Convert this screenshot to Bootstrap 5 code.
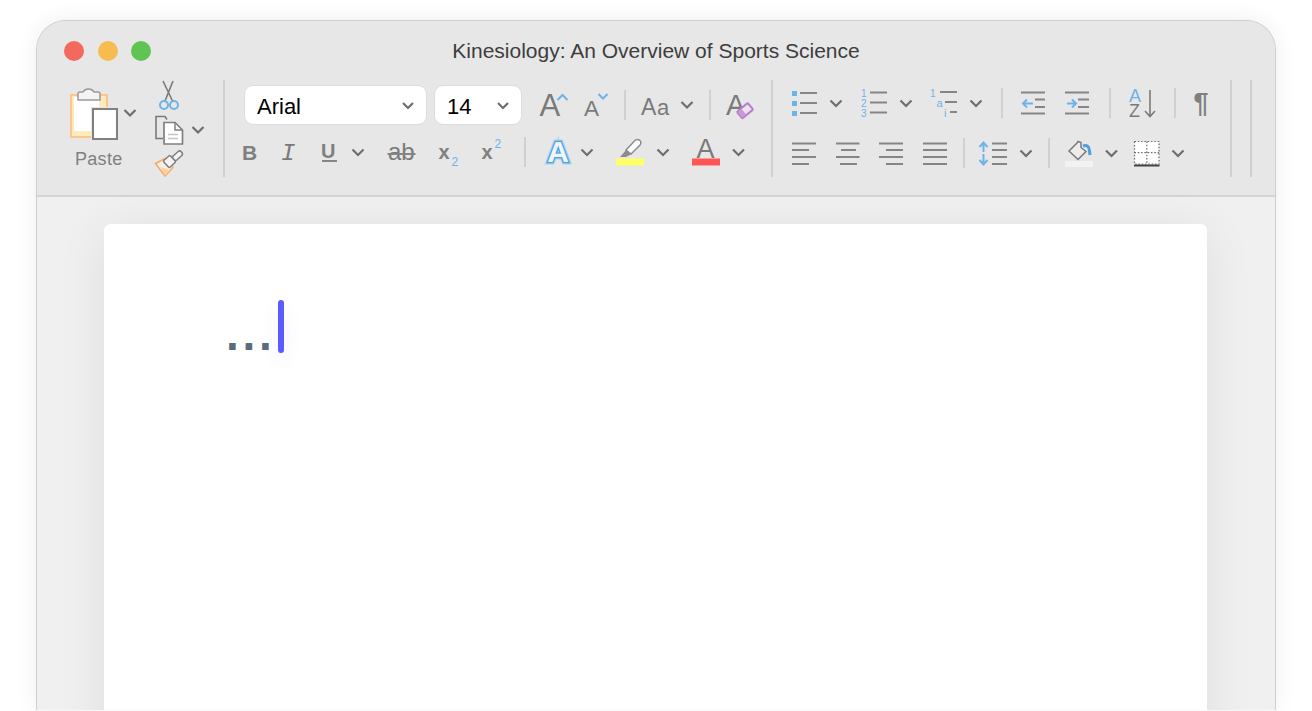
<!DOCTYPE html>
<html lang="en">

<head>
  <meta charset="UTF-8">
  <meta name="viewport" content="width=device-width, initial-scale=1">
  <title>Kinesiology: An Overview of Sports Science</title>
  <link href="https://cdn.jsdelivr.net/npm/bootstrap@5.3.3/dist/css/bootstrap.min.css" rel="stylesheet">
  <style>
    body {
      height: 711px;
      overflow: hidden;
      background-color: #ffffff;
      font-family: "Liberation Sans", Arial, sans-serif;
    }

    .app-window {
      width: 1240px;
      height: 690px;
      margin: 20px auto 0;
      border: 1px solid #cfcfcf;
      border-bottom: 0;
      border-radius: 30px 30px 0 0;
      background-color: #f0f0f0;
      box-shadow: 0 0 22px rgba(0, 0, 0, 0.07);
      overflow: hidden;
    }

    .ribbon {
      height: 176px;
      background-color: #e7e7e7;
      border-bottom: 2px solid #d4d4d4;
    }

    .title-row {
      display: grid;
      grid-template-columns: 1fr auto 1fr;
      align-items: center;
      height: 59px;
    }

    .title-text {
      font-size: 21px;
      color: #3d3d3d;
      white-space: nowrap;
    }

    .light {
      width: 20px;
      height: 20px;
      border-radius: 50%;
    }

    .light-red { background-color: #f4695e; }
    .light-yellow { background-color: #f6bc4f; }
    .light-green { background-color: #60c453; }

    .lights {
      gap: 13.6px;
      padding-left: 27px;
    }

    .tall-sep {
      flex: none;
      width: 2px;
      height: 97px;
      margin: 0 1px 0 -1px;
      background-color: #d0d0d0;
    }

    .tall-sep + .tall-sep { margin-left: 17px; }

    .row-sep {
      flex: none;
      width: 2px;
      height: 30px;
      margin: 0 1px 0 -1px;
      background-color: #d0d0d0;
    }

    .paste-col { width: 113px; }

    .paste-label {
      padding-left: 38px;
      margin-top: 5px;
      font-size: 18px;
      line-height: 24px;
      letter-spacing: 0.3px;
      color: #808080;
    }

    .clip-col { width: 74px; }

    .font-col { width: 546px; }
    .para-col { width: 457px; }

    .font-top {
      height: 40px;
      margin-top: 5px;
    }

    .font-bottom {
      height: 30px;
      margin-top: 12px;
    }

    .para-top {
      height: 30px;
      margin-top: 8px;
    }

    .para-bottom {
      height: 30px;
      margin-top: 20px;
    }

    .font-box {
      height: 40px;
      padding: 2px 12px 0;
      border: 1px solid #dcdcdc;
      border-radius: 9px;
      background-color: #ffffff;
      font-size: 22px;
      color: #000000;
    }

    .box-name { width: 183px; margin-left: 18px; }
    .box-size { width: 88px; margin-left: 7px; }

    .tools svg {
      display: block;
      flex: none;
      overflow: visible;
    }

    .chv, .ln, .ln-thin {
      fill: none;
      stroke: #7a7a7a;
    }

    .chv { stroke: #6e6e6e; stroke-width: 2.2; }
    .ln { stroke-width: 2; stroke: #858585; }
    .ln-thin { stroke-width: 1.6; }

    .blu {
      fill: none;
      stroke: #6db3e8;
      stroke-width: 2;
    }

    .gl {
      font-family: "Liberation Sans", Arial, sans-serif;
      fill: #7a7a7a;
    }

    .gl-b { font-weight: 700; fill: #808080; }
    .gl-blue { fill: #6db3e8; }
    .gl-mono { font-family: "Liberation Mono", monospace; font-style: italic; }

    .a-glow {
      font-weight: 700;
      fill: #dfeffb;
      stroke: #a9d3f2;
      stroke-width: 5px;
      paint-order: stroke;
    }

    .a-core {
      font-weight: 700;
      fill: #eef6fc;
      stroke: #4f9fdc;
      stroke-width: 2.6px;
      paint-order: stroke;
    }

    .doc-sheet {
      height: 600px;
      margin: 27px 68px 0 67px;
      padding: 76px 0 0 122px;
      border-radius: 6px;
      background-color: #ffffff;
      box-shadow: 0 8px 50px rgba(0, 0, 0, 0.08);
    }

    .doc-dots {
      width: 52px;
      margin-top: 8px;
      font-size: 46px;
      font-weight: 700;
      line-height: 53px;
      letter-spacing: 3.7px;
      white-space: nowrap;
      color: #5a6b80;
    }

    .doc-caret {
      width: 6px;
      height: 53px;
      border-radius: 3px;
      background-color: #5b5bff;
      box-shadow: 0 8px 18px rgba(91, 91, 255, 0.1);
    }
  </style>
</head>

<body>
  <div class="app-window">
    <div class="ribbon">
      <div class="title-row">
        <div class="lights d-flex">
          <div class="light light-red"></div>
          <div class="light light-yellow"></div>
          <div class="light light-green"></div>
        </div>
        <div class="title-text">Kinesiology: An Overview of Sports Science</div>
        <div></div>
      </div>

      <div class="tools d-flex">
        <!-- paste -->
        <div class="paste-col">
          <svg width="113" height="62" viewBox="37 80 113 62">
            <rect x="71" y="95" width="36" height="42" fill="#ffe9bd" stroke="#fbc68c" stroke-width="2"/>
            <rect x="74" y="97" width="25" height="34" fill="#ffffff"/>
            <path d="M78 100v-6q0-2 2-2h3a6 5 0 0 1 11 0h4q2 0 2 2v6z" fill="#f4f4f4" stroke="#9a9a9a" stroke-width="1.5"/>
            <rect x="91" y="107" width="28" height="34" fill="#e6e6e6"/>
            <rect x="93" y="109" width="24" height="30" fill="#ffffff" stroke="#808080" stroke-width="2"/>
            <path class="chv" d="M124.500 110l5.500 5.500 5.500-5.500"/>
          </svg>
          <div class="paste-label">Paste</div>
        </div>
        <div class="clip-col">
          <svg width="74" height="33" viewBox="150 80 74 33">
            <path class="ln-thin" d="M163 81l9.500 20M173 81l-8 20"/>
            <circle class="blu" cx="164" cy="105" r="4"/>
            <circle class="blu" cx="174" cy="105" r="4"/>
          </svg>
          <svg width="74" height="35" viewBox="150 113 74 35">
            <path class="ln-thin" d="M163 138.500h-7v-22h9l2 3"/>
            <path d="M164 122.500h11l7.500 7.500v14h-18.500z" fill="#ffffff" stroke="#808080" stroke-width="1.700"/>
            <path d="M175 122.500v7.500h7.500" fill="none" stroke="#808080" stroke-width="1.500"/>
            <path d="M168 134.500h10M168 138.500h10" fill="none" stroke="#c4c4c4" stroke-width="1.500"/>
            <path class="chv" d="M192.500 127l5.500 5.500 5.500-5.500"/>
          </svg>
          <svg width="74" height="29" viewBox="150 148 74 29">
            <path d="M155.500 163.500l9.500-5 8 9-8 8.500z" fill="#f5efe6" stroke="#f6a96b" stroke-width="1.500"/>
            <path d="M160.500 167l9.500 3.500-5 5z" fill="#ffd09a"/>
            <rect x="172" y="153" width="11" height="5.500" rx="2.500" transform="rotate(-42 177.500 155.750)" fill="#f4f4f4" stroke="#7f7f7f" stroke-width="1.500"/>
            <rect x="165" y="157" width="9" height="9" rx="1" transform="rotate(-42 169.500 161.500)" fill="#f4f4f4" stroke="#7f7f7f" stroke-width="1.500"/>
          </svg>
        </div>
        <div class="tall-sep"></div>

        <!-- font group -->
        <div class="font-col">
          <div class="font-top d-flex">
            <button type="button" class="font-box box-name d-flex align-items-center justify-content-between">
              <span>Arial</span>
              <svg width="12" height="8" viewBox="0 0 12 8"><path class="chv" d="M1 1l5 5 5-5"/></svg>
            </button>
            <button type="button" class="font-box box-size d-flex align-items-center justify-content-between">
              <span>14</span>
              <svg width="12" height="8" viewBox="0 0 12 8"><path class="chv" d="M1 1l5 5 5-5"/></svg>
            </button>
            <svg width="52" height="40" viewBox="522 85 52 40">
              <text class="gl" x="539.500" y="116" font-size="31">A</text>
              <path class="blu" d="M557.500 100l5-5 5 5"/>
            </svg>
            <svg width="51" height="40" viewBox="574 85 51 40">
              <text class="gl" x="584" y="116" font-size="22.500">A</text>
              <path class="blu" d="M598.500 94l4.500 4.500 4.500-4.500"/>
            </svg>
            <div class="row-sep align-self-center"></div>
            <svg width="83" height="40" viewBox="627 85 83 40">
              <text class="gl" x="641" y="115" font-size="23">A</text>
              <text class="gl" x="657" y="115" font-size="22">a</text>
              <path class="chv" d="M681.500 102l5.500 5.500 5.500-5.500"/>
            </svg>
            <div class="row-sep align-self-center"></div>
            <svg width="48" height="40" viewBox="712 85 48 40">
              <text class="gl" x="726" y="115" font-size="29">A</text>
              <rect x="738" y="106.500" width="14" height="8.500" rx="1" transform="rotate(-40 745 110.700)" fill="#ece0f1" stroke="#b77fc9" stroke-width="2"/>
              <path d="M737.800 112.500l4-3.300 4.400 5.200-4 3.300z" fill="#c79ad6"/>
            </svg>
          </div>
          <div class="font-bottom d-flex">
            <svg width="44" height="30" viewBox="226 137 44 30">
              <text class="gl gl-b" x="242" y="159.500" font-size="21">B</text>
            </svg>
            <svg width="38" height="30" viewBox="270 137 38 30">
              <text class="gl gl-mono" x="281" y="159.500" font-size="24">I</text>
            </svg>
            <svg width="62" height="30" viewBox="308 137 62 30">
              <text class="gl gl-b" x="321" y="157.500" font-size="20">U</text>
              <path class="ln" d="M322 161h15"/>
              <path class="chv" d="M352.500 149.500l5.500 5.500 5.500-5.500"/>
            </svg>
            <svg width="58" height="30" viewBox="370 137 58 30">
              <text class="gl" x="388" y="159.500" font-size="24">ab</text>
              <path class="ln" d="M387.500 154h28"/>
            </svg>
            <svg width="42" height="30" viewBox="428 137 42 30">
              <text class="gl gl-b" x="438.500" y="158.500" font-size="20">x</text>
              <text class="gl gl-blue" x="451.500" y="166" font-size="12">2</text>
            </svg>
            <svg width="55" height="30" viewBox="470 137 55 30">
              <text class="gl gl-b" x="481.500" y="158.500" font-size="20">x</text>
              <text class="gl gl-blue" x="494.500" y="147.500" font-size="12">2</text>
            </svg>
            <div class="row-sep"></div>
            <svg width="71" height="30" viewBox="527 137 71 30">
              <text class="gl a-glow" x="558" y="162" font-size="30" text-anchor="middle">A</text>
              <text class="gl a-core" x="558" y="162" font-size="30" text-anchor="middle">A</text>
              <path class="chv" d="M581.500 149.500l5.500 5.500 5.500-5.500"/>
            </svg>
            <svg width="76" height="30" viewBox="598 137 76 30">
              <path d="M626 150l9-9.500a2.500 2.500 0 0 1 5 4.500l-9 9z" fill="#ffffff" stroke="#8c8c8c" stroke-width="1.500"/>
              <path d="M626 150l5 4.500-5 2.500h-6z" fill="#8c8c8c"/>
              <rect x="616" y="158.500" width="28" height="7" fill="#ffff66"/>
              <path class="chv" d="M657.500 149.500l5.500 5.500 5.500-5.500"/>
            </svg>
            <svg width="76" height="30" viewBox="674 137 76 30">
              <text class="gl" x="696.500" y="157.500" font-size="27">A</text>
              <rect x="692" y="158.500" width="28" height="7" fill="#ff5555"/>
              <path class="chv" d="M733 149.500l5.500 5.500 5.500-5.500"/>
            </svg>
          </div>
        </div>
        <div class="tall-sep"></div>

        <!-- paragraph group -->
        <div class="para-col">
          <div class="para-top d-flex">
            <svg width="76" height="30" viewBox="774 88 76 30">
              <path d="M792 91h5v5h-5zM792 101h5v5h-5zM792 111h5v5h-5z" fill="#6db3e8"/>
              <path class="ln" d="M800 93h17M800 103h17M800 113h17"/>
              <path class="chv" d="M830.500 100.500l5.500 5.500 5.500-5.500"/>
            </svg>
            <svg width="70" height="30" viewBox="850 88 70 30">
              <text class="gl gl-blue" x="861" y="96.500" font-size="10">1</text>
              <text class="gl gl-blue" x="861" y="106.500" font-size="10">2</text>
              <text class="gl gl-blue" x="861" y="116.500" font-size="10">3</text>
              <path class="ln" d="M870 92.500h17M870 102.500h17M870 112.500h17"/>
              <path class="chv" d="M900.500 100.500l5.500 5.500 5.500-5.500"/>
            </svg>
            <svg width="82" height="30" viewBox="920 88 82 30">
              <text class="gl gl-blue" x="930" y="96.500" font-size="10">1</text>
              <text class="gl gl-blue" x="936.500" y="107" font-size="11">a</text>
              <text class="gl gl-blue" x="944" y="117" font-size="11">i</text>
              <path class="ln" d="M940 92h17M945 102h12M950 112h7"/>
              <path class="chv" d="M970.500 100.500l5.500 5.500 5.500-5.500"/>
            </svg>
            <div class="row-sep"></div>
            <svg width="51" height="30" viewBox="1004 88 51 30">
              <path class="ln" d="M1021 92.500h24M1035 99.500h10M1035 107h10M1021 113.500h24"/>
              <path class="blu" d="M1033 103.500h-10M1027 99.500l-4 4 4 4"/>
            </svg>
            <svg width="55" height="30" viewBox="1055 88 55 30">
              <path class="ln" d="M1065 92.500h24M1078 99.500h11M1078 107h11M1065 113.500h24"/>
              <path class="blu" d="M1067 103.500h9M1072 99.500l4 4-4 4"/>
            </svg>
            <div class="row-sep"></div>
            <svg width="63" height="30" viewBox="1112 88 63 30">
              <text class="gl gl-blue" x="1129" y="102" font-size="18">A</text>
              <text class="gl" x="1129" y="117" font-size="18">Z</text>
              <path class="ln-thin" d="M1150 90v26M1145 111l5 5.500 5-5.500"/>
            </svg>
            <div class="row-sep"></div>
            <svg width="48" height="30" viewBox="1177 88 48 30">
              <text class="gl gl-b" x="1193.500" y="112" font-size="27">¶</text>
            </svg>
          </div>
          <div class="para-bottom d-flex">
            <svg width="52" height="30" viewBox="774 138 52 30">
              <path class="ln" d="M792 143.500h24M792 150h17M792 157h24M792 164h17"/>
            </svg>
            <svg width="43" height="30" viewBox="826 138 43 30">
              <path class="ln" d="M836 143.500h23.500M841 150h15M836 157h23.500M840 164h17"/>
            </svg>
            <svg width="44" height="30" viewBox="869 138 44 30">
              <path class="ln" d="M879 143.500h24M886 150h17M879 157h24M886 164h17"/>
            </svg>
            <svg width="51" height="30" viewBox="913 138 51 30">
              <path class="ln" d="M923 143.500h24M923 150h24M923 157h24M923 164h24"/>
            </svg>
            <div class="row-sep"></div>
            <svg width="83" height="30" viewBox="966 138 83 30">
              <path class="blu" d="M983.500 152v-9M979.500 147l4-4.500 4 4.500M983.500 154v10M979.500 160l4 4.500 4-4.500"/>
              <path class="ln" d="M992 143.500h15M992 150h15M992 157h15M992 164h15"/>
              <path class="chv" d="M1020.500 150.500l5.500 5.500 5.500-5.500"/>
            </svg>
            <div class="row-sep"></div>
            <svg width="71" height="30" viewBox="1051 138 71 30">
              <rect x="1065" y="161" width="28" height="6" fill="#f2f2f2"/>
              <path d="M1069 151l8-8 1-1.500 3 1v5l5 4-8 8z" fill="#ececec" stroke="#7a7a7a" stroke-width="1.500"/>
              <path d="M1083 146q6-2 6.500 5l.5 4" fill="none" stroke="#4f9fdc" stroke-width="3"/>
              <path class="chv" d="M1106 150.500l5.500 5.500 5.500-5.500"/>
            </svg>
            <svg width="73" height="30" viewBox="1122 138 73 30">
              <rect x="1134.500" y="141.500" width="24.500" height="22.500" fill="#ffffff"/>
              <path d="M1134.500 141.500h24.500v22.500h-24.500zM1146.800 141.500v22.500M1134.500 152.700h24.500" fill="none" stroke="#6a6a6a" stroke-width="1.200" stroke-dasharray="1.500 1.800"/>
              <path d="M1134 165.500h25.500" fill="none" stroke="#444444" stroke-width="1.800"/>
              <path class="chv" d="M1172.500 150.500l5.500 5.500 5.500-5.500"/>
            </svg>
          </div>
        </div>
        <div class="tall-sep"></div>
        <div class="tall-sep"></div>
      </div>
    </div>

    <div class="doc-sheet d-flex align-items-start">
      <span class="doc-dots">...</span>
      <div class="doc-caret"></div>
    </div>
  </div>

  <script src="https://cdn.jsdelivr.net/npm/bootstrap@5.3.3/dist/js/bootstrap.bundle.min.js"></script>
</body>

</html>
